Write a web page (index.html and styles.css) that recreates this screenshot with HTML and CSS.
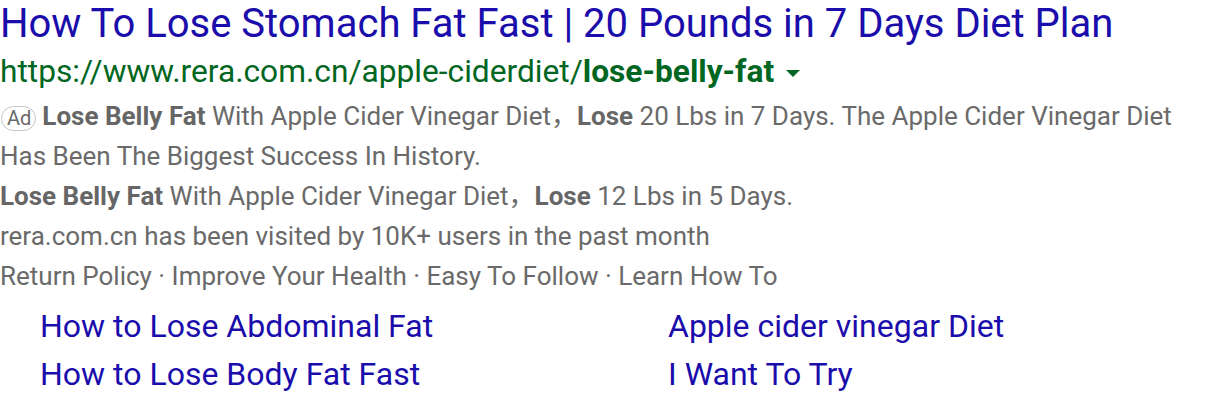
FILE: index.html
```html
<!DOCTYPE html>
<html>
<head>
<meta charset="utf-8">
<link rel="stylesheet" href="styles.css">
</head>
<body>
<div class="ad">
  <h1 class="title">How To Lose Stomach Fat Fast | 20 Pounds in 7 Days Diet Plan</h1>
  <div class="url">https://www.rera.com.cn/apple-ciderdiet/<b>lose-belly-fat</b><span class="caret"></span></div>
  <div class="desc">
    <p><span class="badge">Ad</span><b>Lose Belly Fat</b> With Apple Cider Vinegar Diet，<b>Lose</b> 20 Lbs in 7 Days. The Apple Cider Vinegar Diet Has Been The Biggest Success In History.</p>
    <p><b>Lose Belly Fat</b> With Apple Cider Vinegar Diet，<b>Lose</b> 12 Lbs in 5 Days.</p>
    <p>rera.com.cn has been visited by 10K+ users in the past month</p>
    <p>Return Policy · Improve Your Health · Easy To Follow · Learn How To</p>
  </div>
  <div class="sitelinks">
    <a>How to Lose Abdominal Fat</a>
    <a>Apple cider vinegar Diet</a>
    <a>How to Lose Body Fat Fast</a>
    <a>I Want To Try</a>
  </div>
</div>
</body>
</html>
```
FILE: styles.css
```css
html, body {
  margin: 0;
  padding: 0;
  background: #fff;
}
body {
  font-family: Roboto, "Noto Sans", "Noto Sans CJK SC", sans-serif;
}
.ad {
  width: 1216px;
}
.title {
  margin: 0;
  font-weight: 400;
  font-size: 40px;
  line-height: 47px;
  color: #1a0dab;
  white-space: nowrap;
}
.url {
  font-size: 31.7px;
  line-height: 49px;
  color: #006621;
  display: flex;
  align-items: center;
  white-space: nowrap;
}
.url b {
  font-weight: 700;
}
.caret {
  width: 0;
  height: 0;
  border-left: 7px solid transparent;
  border-right: 7px solid transparent;
  border-top: 7px solid #006621;
  margin-left: 12px;
  margin-top: 4px;
}
.desc {
  max-width: 1195px;
  color: #6a6a6a;
  font-size: 26px;
  line-height: 40px;
}
.desc p {
  margin: 0;
}
.desc b {
  color: #666;
  font-weight: 700;
}
.badge {
  display: inline-block;
  font-size: 20px;
  line-height: 23px;
  padding: 0 4px 0 5px;
  border: 1px solid #c6c6c6;
  border-radius: 13px;
  color: #6a6a6a;
  margin: 0 6px 0 1px;
  vertical-align: 0;
}
.sitelinks {
  display: grid;
  grid-template-columns: 628px 1fr;
  padding-left: 40px;
  margin-top: 6px;
}
.sitelinks a {
  font-size: 32px;
  line-height: 48px;
  color: #1a0dab;
}
```
